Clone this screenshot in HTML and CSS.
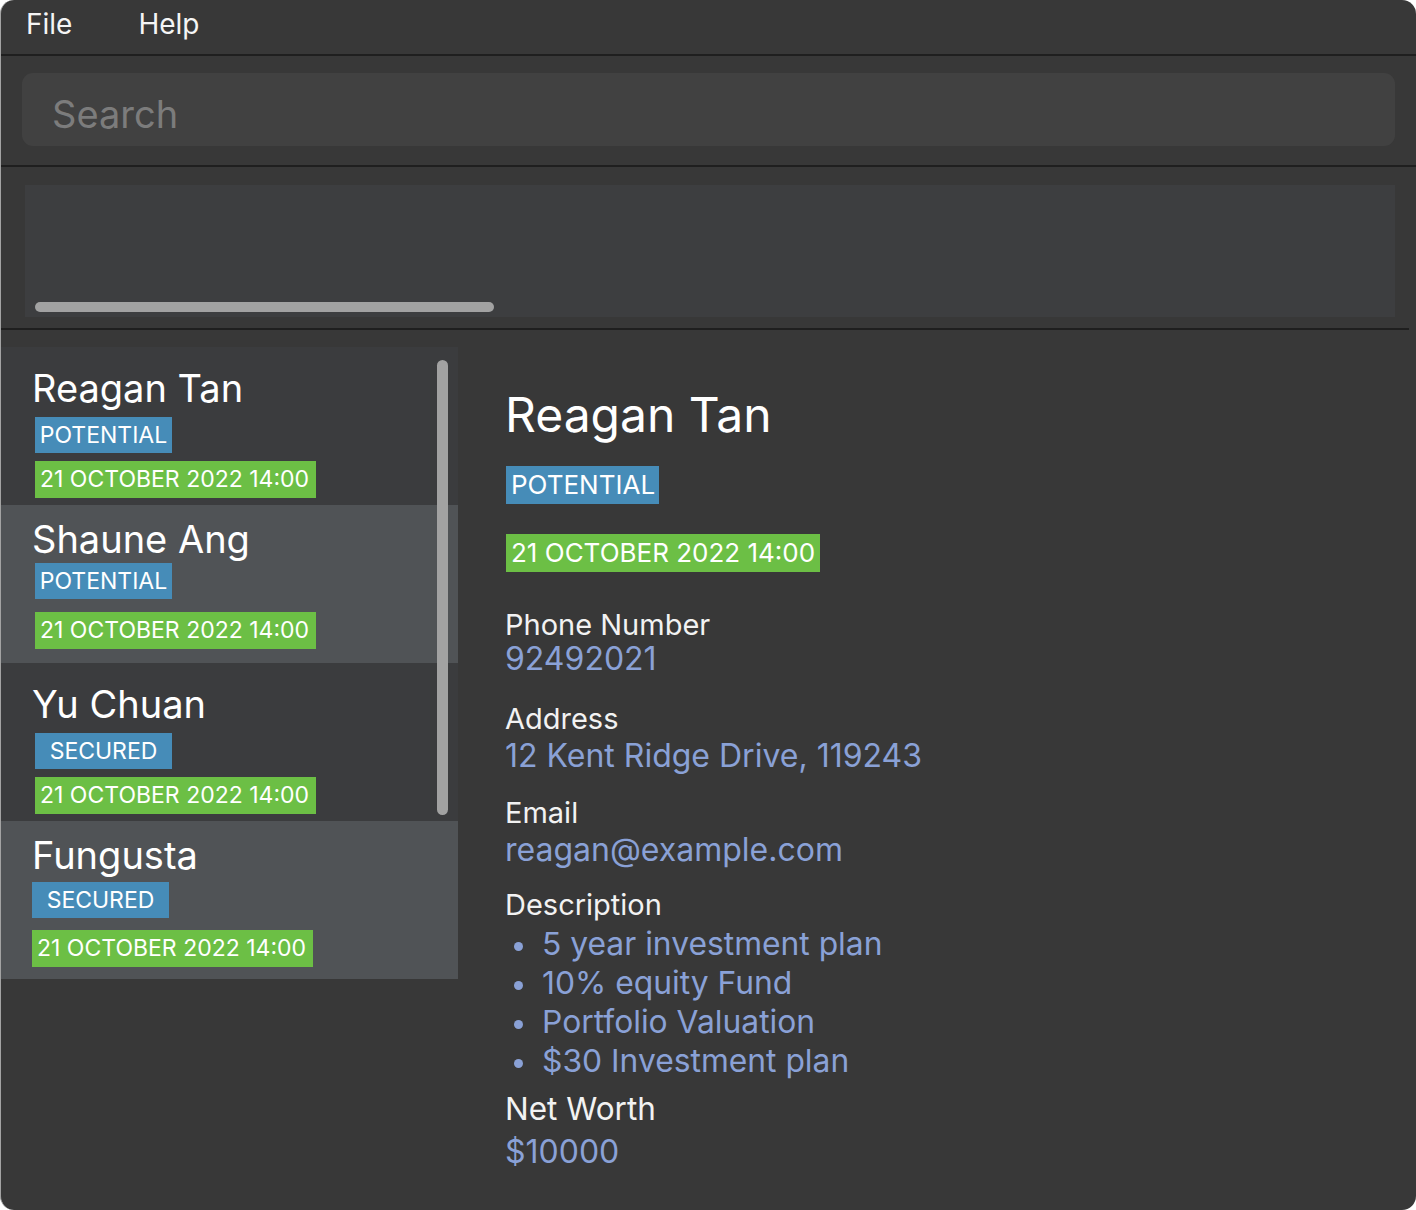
FILE: index.html
```html
<!DOCTYPE html>
<html lang="en">
<head>
<meta charset="utf-8">
<title>Address Book</title>
<link rel="stylesheet" href="styles.css">
</head>
<body>
<div class="window">
  <nav class="menubar">
    <span class="menu-item">File</span>
    <span class="menu-item">Help</span>
  </nav>
  <section class="search-section">
    <input class="search-box" type="text" placeholder="Search">
  </section>
  <section class="result-section">
    <div class="result-box">
      <div class="h-thumb"></div>
    </div>
  </section>
  <main class="main">
    <div class="list-panel">
      <div class="list-item dark">
        <div class="item-name">Reagan Tan</div>
        <div class="tag status">POTENTIAL</div>
        <div class="tag date">21 OCTOBER 2022 14:00</div>
      </div>
      <div class="list-item light">
        <div class="item-name">Shaune Ang</div>
        <div class="tag status">POTENTIAL</div>
        <div class="tag date">21 OCTOBER 2022 14:00</div>
      </div>
      <div class="list-item dark">
        <div class="item-name">Yu Chuan</div>
        <div class="tag status">SECURED</div>
        <div class="tag date">21 OCTOBER 2022 14:00</div>
      </div>
      <div class="list-item light shifted">
        <div class="item-name">Fungusta</div>
        <div class="tag status">SECURED</div>
        <div class="tag date">21 OCTOBER 2022 14:00</div>
      </div>
      <div class="v-thumb"></div>
    </div>
    <div class="detail-panel">
      <h1 class="detail-name">Reagan Tan</h1>
      <div class="detail-tags">
        <span class="dtag status">POTENTIAL</span>
        <span class="dtag date">21 OCTOBER 2022 14:00</span>
      </div>
      <div class="field phone">
        <div class="label">Phone Number</div>
        <div class="value">92492021</div>
      </div>
      <div class="field address">
        <div class="label">Address</div>
        <div class="value">12 Kent Ridge Drive, 119243</div>
      </div>
      <div class="field email">
        <div class="label">Email</div>
        <div class="value">reagan@example.com</div>
      </div>
      <div class="field description">
        <div class="label">Description</div>
        <ul class="bullets">
          <li>5 year investment plan</li>
          <li>10% equity Fund</li>
          <li>Portfolio Valuation</li>
          <li>$30 Investment plan</li>
        </ul>
      </div>
      <div class="field networth">
        <div class="label">Net Worth</div>
        <div class="value">$10000</div>
      </div>
    </div>
  </main>
</div>
</body>
</html>
```

FILE: styles.css
```css
* { box-sizing: border-box; }

html, body {
  margin: 0;
  padding: 0;
  background: #ffffff;
}

body {
  font-family: "Inter", "Noto Sans", "Liberation Sans", sans-serif;
  color: #ffffff;
}

.window {
  width: 1416px;
  height: 1210px;
  background: #383838;
  border-left: 1px solid #a3a3a3;
  border-radius: 14px;
  overflow: hidden;
  display: flex;
  flex-direction: column;
}

/* menu bar */
.menubar {
  height: 56px;
  padding: 0 0 6px 25px;
  display: flex;
  gap: 66px;
  border-bottom: 2px solid #1f1f1f;
}

.menu-item {
  font-size: 28px;
  line-height: 48px;
  color: #f5f5f5;
}

/* search */
.search-section {
  height: 111px;
  padding: 17px 21px 0 21px;
  border-bottom: 2px solid #1f1f1f;
}

.search-box {
  display: block;
  width: 100%;
  height: 73px;
  margin: 0;
  border: none;
  outline: none;
  border-radius: 11px;
  background: #414141;
  padding: 9px 0 0 30px;
  font-family: inherit;
  font-size: 38px;
  color: #dddddd;
}

.search-box::placeholder {
  color: #7c7c7c;
}

/* result display */
.result-section {
  height: 163px;
  margin-right: 7px;
  padding: 18px 14px 0 24px;
  border-bottom: 2px solid #1f1f1f;
}

.result-box {
  height: 132px;
  background: #3d3e40;
  display: flex;
  flex-direction: column;
  justify-content: flex-end;
  padding: 0 0 5px 10px;
}

.h-thumb {
  width: 459px;
  height: 10px;
  border-radius: 5px;
  background: #a2a2a2;
}

/* main area */
.main {
  flex: 1;
  display: flex;
  align-items: flex-start;
}

.list-panel {
  position: relative;
  width: 457px;
  margin-top: 17px;
  flex: none;
}

.list-item {
  height: 158px;
  padding-left: 31px;
  display: flex;
  flex-direction: column;
  align-items: flex-start;
}

.list-item.dark {
  background: #3b3c3e;
  padding-top: 19px;
}

.list-item.light {
  background: #505356;
  padding-top: 12px;
}

.item-name {
  font-size: 38px;
  line-height: 44px;
  color: #ffffff;
}

.tag {
  height: 36px;
  font-size: 23px;
  line-height: 36px;
  color: #ffffff;
  margin-left: 3px;
  white-space: nowrap;
}

.tag.status {
  width: 137px;
  text-align: center;
  background: #468cb8;
}

.tag.date {
  height: 37px;
  line-height: 37px;
  padding: 0 7px 0 5px;
  background: #6cbf45;
}

.dark .tag.status { margin-top: 7px; }
.dark .tag.date { margin-top: 8px; }
.light .tag.status { margin-top: 2px; }
.light .tag.date { margin-top: 13px; }

.shifted .tag { margin-left: 0; }
.shifted .tag.status { margin-top: 5px; }
.shifted .tag.date { margin-top: 12px; }

.v-thumb {
  position: absolute;
  left: 436px;
  top: 13px;
  width: 11px;
  height: 455px;
  border-radius: 6px;
  background: #a2a2a2;
}

/* detail panel */
.detail-panel {
  flex: 1;
  padding: 56px 0 0 47px;
}

.detail-name {
  margin: 0;
  font-size: 48px;
  line-height: 58px;
  font-weight: 400;
  color: #ffffff;
}

.detail-tags {
  display: flex;
  flex-direction: column;
  align-items: flex-start;
  gap: 30px;
  margin-top: 22px;
  margin-left: 1px;
}

.dtag {
  display: block;
  height: 38px;
  font-size: 26px;
  line-height: 38px;
  padding: 0 5px;
  color: #ffffff;
  white-space: nowrap;
}

.dtag.status { background: #468cb8; padding: 0 4px 0 5px; }
.dtag.date { background: #6cbf45; padding: 0 5px 0 5px; }

.field .label {
  font-size: 29px;
  line-height: 34px;
  color: #f2f2f2;
}

.field .value {
  font-size: 32px;
  line-height: 38px;
  color: #8aa1d6;
}

.field.phone { margin-top: 36px; }
.field.phone .value { line-height: 34px; }
.field.address { margin-top: 26px; }
.field.address .value { margin-top: 1px; }
.field.email { margin-top: 21px; }
.field.email .value { margin-top: 1px; }
.field.description { margin-top: 19px; }
.field.networth { margin-top: 12px; }
.field.networth .label { font-size: 31.5px; }
.field.networth .value { margin-top: 7px; }

.bullets {
  list-style: none;
  margin: 2px 0 0 0;
  padding: 0;
}

.bullets li {
  display: flex;
  align-items: center;
  font-size: 31.8px;
  line-height: 39px;
  color: #8aa1d6;
}

.bullets li::before {
  content: "";
  flex: none;
  width: 9px;
  height: 9px;
  border-radius: 50%;
  background: #8aa1d6;
  margin: 5px 19px 0 9px;
}
```
